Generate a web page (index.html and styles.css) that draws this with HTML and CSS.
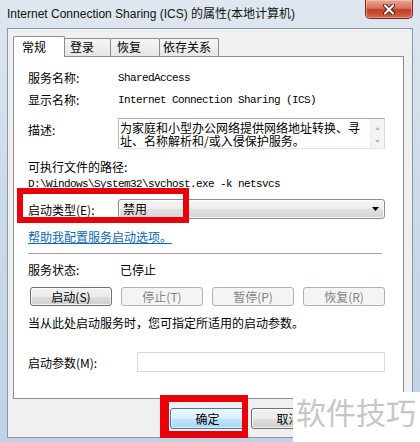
FILE: index.html
```html
<!DOCTYPE html>
<html lang="zh-CN">
<head>
<meta charset="utf-8">
<title>Internet Connection Sharing (ICS) 的属性(本地计算机)</title>
<link rel="stylesheet" href="styles.css">
</head>
<body>
<div class="window">
  <div class="titlebar">
    <div class="title">Internet Connection Sharing (ICS) 的属性(本地计算机)</div>
    <div class="close">
      <svg width="12" height="11" viewBox="0 0 12 11">
        <path d="M2 1.5 L10 9.5 M10 1.5 L2 9.5" stroke="#4a1a14" stroke-width="4" stroke-linecap="round"/>
        <path d="M2 1.5 L10 9.5 M10 1.5 L2 9.5" stroke="#ffffff" stroke-width="2.2" stroke-linecap="round"/>
      </svg>
    </div>
  </div>
  <div class="client">
    <div class="tabs">
      <div class="tab active">常规</div>
      <div class="tab w-login">登录</div>
      <div class="tab w-recover">恢复</div>
      <div class="tab w-dep">依存关系</div>
    </div>
    <div class="panel">
      <div class="row line"><span class="label">服务名称:</span><span class="mono">SharedAccess</span></div>
      <div class="row line gap6"><span class="label">显示名称:</span><span class="mono">Internet Connection Sharing (ICS)</span></div>
      <div class="row desc-row gap10">
        <span class="label desc-label">描述:</span>
        <div class="desc-box">
          <div class="desc-text">为家庭和小型办公网络提供网络地址转换、寻<br>址、名称解析和/或入侵保护服务。</div>
          <div class="scroll">
            <svg width="13" height="29" viewBox="0 0 13 29">
              <path d="M4 11 L9 11 L6.5 8 Z" fill="#b8b8b8"/>
              <path d="M4 21 L9 21 L6.5 24 Z" fill="#b8b8b8"/>
            </svg>
          </div>
        </div>
      </div>
      <div class="line gap10">可执行文件的路径:</div>
      <div class="line gap1 mono">D:\Windows\System32\svchost.exe -k netsvcs</div>
      <div class="row gap7">
        <span class="label">启动类型(E):</span>
        <div class="select">
          <span>禁用</span>
          <svg width="7" height="4" viewBox="0 0 7 4"><path d="M0 0 L7 0 L3.5 4 Z" fill="#000"/></svg>
        </div>
      </div>
      <div class="line gap10"><span class="link">帮助我配置服务启动选项。</span></div>
      <div class="sep"></div>
      <div class="row line gap8"><span class="label status-label">服务状态:</span><span>已停止</span></div>
      <div class="btn-row">
        <div class="btn">启动(S)</div>
        <div class="btn disabled">停止(T)</div>
        <div class="btn disabled">暂停(P)</div>
        <div class="btn disabled">恢复(R)</div>
      </div>
      <div class="line gap9">当从此处启动服务时，您可指定所适用的启动参数。</div>
      <div class="row param-row">
        <span class="label param-label">启动参数(M):</span>
        <div class="param-input"></div>
      </div>
    </div>
    <div class="footer">
      <div class="btn fbtn default">确定</div>
      <div class="btn fbtn">取消</div>
      <div class="btn fbtn">应用(A)</div>
    </div>
  </div>
</div>
<div class="mark mark-type"></div>
<div class="mark mark-ok"></div>
<div class="watermark">软件技巧</div>
</body>
</html>
```
FILE: styles.css
```css
* { box-sizing: border-box; }
html, body { margin: 0; padding: 0; }
body {
  width: 420px;
  height: 442px;
  position: relative;
  overflow: hidden;
  font-family: "Noto Sans CJK SC", sans-serif;
  font-size: 12px;
  color: #000;
  background: linear-gradient(to bottom, #dfe7f0 0%, #cddbe9 40%, #bfd2e6 100%);
}
.window {
  display: flex;
  flex-direction: column;
  height: 442px;
  padding: 0 7px 4px 7px;
}
.titlebar {
  height: 28px;
  display: flex;
  justify-content: space-between;
  align-items: flex-start;
}
.title {
  padding-top: 6px;
  line-height: 16px;
  font-family: "Liberation Sans", "Noto Sans CJK SC", sans-serif;
  font-size: 12px;
  color: #111;
}
.close {
  width: 48px;
  height: 19px;
  border: 1px solid #6b2a20;
  border-top: none;
  border-radius: 0 0 5px 5px;
  background: linear-gradient(to bottom, #e9a596 0%, #d6745f 45%, #c23d22 55%, #d2664c 100%);
  box-shadow: inset 0 0 0 1px rgba(255, 210, 200, 0.5);
  display: flex;
  align-items: center;
  justify-content: center;
}
.client {
  height: 410px;
  border: 1px solid #8797aa;
  background: #f0f0f0;
  padding: 7px 8px 8px 5px;
  display: flex;
  flex-direction: column;
}
.tabs {
  display: flex;
  align-items: flex-end;
  height: 21px;
  margin-bottom: -1px;
  position: relative;
  z-index: 1;
}
.tab {
  height: 18px;
  margin-bottom: 1px;
  margin-left: -1px;
  border: 1px solid #898c95;
  border-bottom: none;
  border-radius: 2px 2px 0 0;
  background: linear-gradient(to bottom, #f6f6f6, #e6e6e6);
  line-height: 16px;
  padding-left: 5px;
  white-space: nowrap;
}
.tab.active {
  height: 21px;
  width: 52px;
  margin-bottom: 0;
  margin-left: 0;
  background: #fff;
  padding-left: 8px;
  line-height: 19px;
  position: relative;
  z-index: 2;
}
.w-login { width: 47px; }
.w-recover { width: 50px; padding-left: 6px; }
.w-dep { width: 60px; padding-left: 3px; }
.panel {
  flex: 0 0 343px;
  height: 343px;
  background: #fff;
  border: 1px solid #898c95;
  padding: 13px 18px 0 14px;
}
.row { display: flex; align-items: center; }
.line { height: 16px; line-height: 16px; white-space: nowrap; }
.label { width: 90px; flex: none; white-space: nowrap; }
.gap1 { margin-top: 1px; }
.gap6 { margin-top: 6px; }
.gap7 { margin-top: 7px; }
.gap8 { margin-top: 8px; }
.gap9 { margin-top: 9px; }
.gap10 { margin-top: 10px; }
.mono {
  font-family: "Liberation Mono", "DejaVu Sans Mono", monospace;
  font-size: 11px;
  letter-spacing: -0.6px;
}
.desc-row { align-items: flex-start; }
.desc-label { padding-top: 4px; line-height: 16px; }
.desc-box {
  flex: 1;
  height: 31px;
  border: 1px solid;
  border-color: #a9abb2 #d6dae0 #e1e5ea #b8bbc1;
  display: flex;
}
.desc-text {
  flex: 1;
  padding: 2px 0 0 1px;
  line-height: 13px;
  white-space: nowrap;
  overflow: hidden;
}
.scroll {
  width: 14px;
  background: #f4f4f4;
  border-left: 1px solid #ececec;
}
.select {
  flex: 1;
  height: 20px;
  border: 1px solid #8c8c8c;
  border-radius: 3px;
  background: linear-gradient(to bottom, #f5f5f5 0%, #ededed 50%, #e0e0e0 51%, #d5d5d5 100%);
  box-shadow: inset 0 0 0 1px rgba(255, 255, 255, 0.8);
  display: flex;
  align-items: center;
  justify-content: space-between;
  padding: 0 5px 0 4px;
  line-height: 18px;
}
.link { color: #0d67b6; text-decoration: underline; }
.sep {
  margin-top: 8px;
  margin-right: 3px;
  height: 1px;
  background: #a0a0a0;
}
.status-label { width: 92px; }
.btn-row {
  display: flex;
  gap: 9px;
  margin: 9px 0 0 2px;
}
.btn {
  width: 82px;
  height: 19px;
  border: 1px solid #707070;
  border-radius: 3px;
  background: linear-gradient(to bottom, #f2f2f2 0%, #ebebeb 50%, #dddddd 51%, #cfcfcf 100%);
  box-shadow: inset 0 0 0 1px rgba(255, 255, 255, 0.75);
  display: flex;
  align-items: center;
  justify-content: center;
  line-height: 16px;
  white-space: nowrap;
}
.btn.disabled {
  border-color: #adb2b5;
  background: #f4f4f4;
  box-shadow: none;
  color: #838383;
}
.param-row { margin-top: 21px; }
.param-label { width: 109px; }
.param-input {
  flex: 1;
  height: 20px;
  border: 1px solid #dadada;
  background: #fff;
}
.footer {
  display: flex;
  justify-content: flex-end;
  gap: 6px;
  margin-top: 9px;
  margin-right: -3px;
}
.fbtn { width: 75px; height: 21px; }
.fbtn.default {
  border-color: #3c7fb1;
  background: linear-gradient(to bottom, #eaf6fd 0%, #d9f0fc 50%, #bee6fd 51%, #a7d9f5 100%);
  box-shadow: inset 0 0 0 1px rgba(255, 255, 255, 0.6);
}
.mark {
  position: absolute;
  border: 6px solid #e8000b;
}
.mark-type { left: 17px; top: 188px; width: 172px; height: 35px; }
.mark-ok { left: 160px; top: 395px; width: 88px; height: 43px; border-width: 7px 6px 7px 9px; }
.watermark {
  position: absolute;
  left: 293px;
  top: 392px;
  width: 127px;
  height: 50px;
  background: #fff;
  color: #c6c6c6;
  font-family: "Noto Sans CJK SC", sans-serif;
  font-size: 30px;
  line-height: 30px;
  padding: 4px 0 0 3px;
  white-space: nowrap;
}
```
